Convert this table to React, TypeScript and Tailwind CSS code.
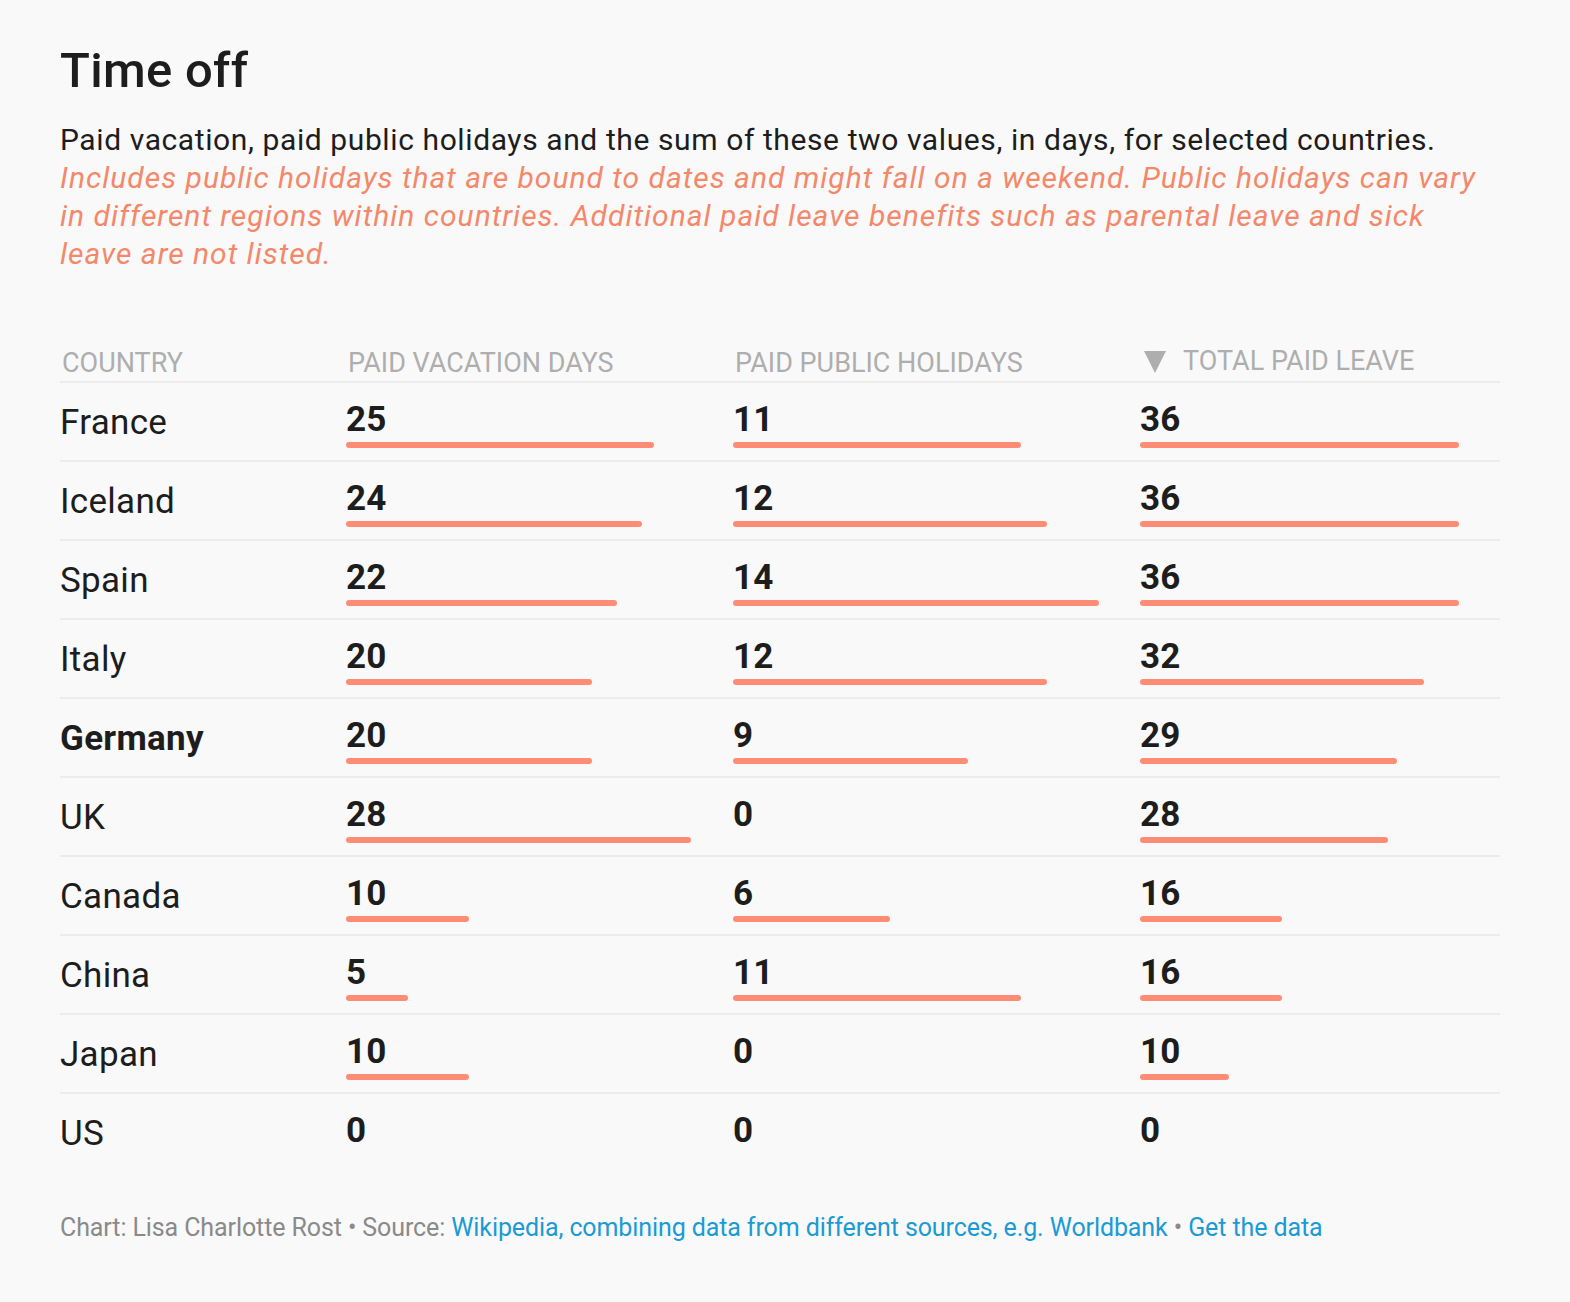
import React from "react";

type Row = { country: string; vac: number; hol: number; bold?: boolean };

const rows: Row[] = [
  { country: "France", vac: 25, hol: 11 },
  { country: "Iceland", vac: 24, hol: 12 },
  { country: "Spain", vac: 22, hol: 14 },
  { country: "Italy", vac: 20, hol: 12 },
  { country: "Germany", vac: 20, hol: 9, bold: true },
  { country: "UK", vac: 28, hol: 0 },
  { country: "Canada", vac: 10, hol: 6 },
  { country: "China", vac: 5, hol: 11 },
  { country: "Japan", vac: 10, hol: 0 },
  { country: "US", vac: 0, hol: 0 },
];

function Cell({ value, max, maxPx }: { value: number; max: number; maxPx: number }) {
  const w = (value / max) * maxPx;
  return (
    <div className="flex flex-col pt-[20px] pb-[12px]">
      <div className="text-[35px] leading-[34px] font-bold tracking-[0.2px] text-[#1d1d1d]">{value}</div>
      <div className="mt-[5px] h-[6px]">
        {value > 0 && (
          <div className="h-[6px] rounded-[3px] bg-[#ff8d76]" style={{ width: `${w}px` }} />
        )}
      </div>
    </div>
  );
}

export default function App() {
  return (
    <div className="min-h-screen bg-[#f9f9f9] [font-family:Roboto,sans-serif] text-[#1d1d1d]">
      <div className="w-[1500px] pl-[60px] pt-[42px] pb-[40px]">
        <h1 className="text-[49px] leading-[58px] font-medium tracking-[0.3px] text-[#1d1d1d]">Time off</h1>
        <div className="mt-[21px] text-[30px] leading-[38px] tracking-[0.6px]">
          <div>
            Paid vacation, paid public holidays and the sum of these two values, in days, for selected countries.
          </div>
          <div className="italic tracking-[1px] text-[#f4886a] whitespace-nowrap">
            Includes public holidays that are bound to dates and might fall on a weekend. Public holidays can vary
            <br />
            in different regions within countries. Additional paid leave benefits such as parental leave and sick
            <br />
            leave are not listed.
          </div>
        </div>

        <div className="mt-[75px]">
          <div className="grid grid-cols-[286px_387px_407px_360px] border-b-2 border-[#ececec] pb-[3px] text-[27px] leading-[30px] text-[#aeaeae]">
            <div className="pl-[2px]">COUNTRY</div>
            <div className="pl-[2px]">PAID VACATION DAYS</div>
            <div className="pl-[2px]">PAID PUBLIC HOLIDAYS</div>
            <div className="flex items-center gap-[16px] pl-[3px] -translate-y-[2px]">
              <svg width="24" height="24" viewBox="0 0 24 24" className="shrink-0">
                <path d="M1 2 H23 L12 24 Z" fill="#aeaeae" />
              </svg>
              <span>TOTAL PAID LEAVE</span>
            </div>
          </div>
          {rows.map((r, i) => (
            <div
              key={r.country}
              className={`grid grid-cols-[286px_387px_407px_360px] ${
                i < rows.length - 1 ? "border-b-2 border-[#ececec]" : ""
              }`}
            >
              <div
                className={`pt-[23px] text-[35px] leading-[34px] tracking-[0.3px] ${
                  r.bold ? "font-bold" : "font-normal"
                }`}
              >
                {r.country}
              </div>
              <Cell value={r.vac} max={28} maxPx={345} />
              <Cell value={r.hol} max={14} maxPx={366} />
              <Cell value={r.vac + r.hol} max={36} maxPx={319} />
            </div>
          ))}
        </div>

        <div className="mt-[42px] text-[25px] leading-[30px] tracking-[-0.1px] text-[#8a8a8a]">
          Chart: Lisa Charlotte Rost • Source:{" "}
          <a className="text-[#1a9bd5]">Wikipedia, combining data from different sources, e.g. Worldbank</a> •{" "}
          <a className="text-[#1a9bd5]">Get the data</a>
        </div>
      </div>
    </div>
  );
}
